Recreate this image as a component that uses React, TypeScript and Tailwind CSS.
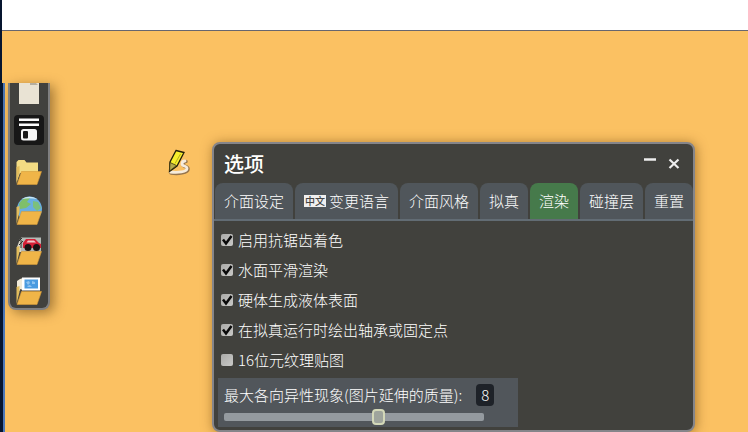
import { useState } from 'react';
import type { ButtonHTMLAttributes, ReactNode } from 'react';

const tabs = ['介面设定', '变更语言', '介面风格', '拟真', '渲染', '碰撞层', '重置'];

const renderOptions = [
  { label: '启用抗锯齿着色', on: true },
  { label: '水面平滑渲染', on: true },
  { label: '硬体生成液体表面', on: true },
  { label: '在拟真运行时绘出轴承或固定点', on: true },
  { label: '16位元纹理贴图', on: false },
];

function ToolButton({ className = '', ...props }: ButtonHTMLAttributes<HTMLButtonElement>) {
  return <button type="button" {...props} className={`flex justify-center ${className}`} />;
}

function Folder({ children }: { children?: ReactNode }) {
  return (
    <svg viewBox="0 0 26 30" className="h-[30px] w-[26px]">
      {children}
      <path d="M0.5 29V12l3-1v6z" fill="#e3bd5c" />
      <path d="M5.5 16.500H25.500L21 29.500H1z" fill="#f0b548" stroke="#d79c38" strokeWidth="0.6" />
    </svg>
  );
}

function Sidebar() {
  return (
    <nav className="flex flex-col gap-2.5 rounded-b-lg border-2 border-t-0 border-[#7f7f80] bg-[#41413e] px-1 pb-[3px] shadow-[4px_3px_12px_rgba(80,50,10,0.5)]">
      <ToolButton aria-label="新建">
        <svg viewBox="0 0 22 22" className="size-[22px]">
          <path d="M1 0h20v21H1z" fill="#e9e3d4" />
          <path d="M12 0v2h8l-2-2z" fill="#b5aea0" />
        </svg>
      </ToolButton>
      <ToolButton aria-label="保存">
        <svg viewBox="0 0 30 30" className="size-[30px]">
          <rect width="30" height="30" rx="4" fill="#171717" />
          <path d="M5 3.500h20v2.500H5zM5 8.500h20v2.500H5z" fill="#fff" />
          <rect x="7" y="14" width="16" height="11.500" rx="2.500" fill="#f5f5f5" />
          <rect x="9" y="16" width="5" height="7.500" rx="1" fill="#171717" />
        </svg>
      </ToolButton>
      <ToolButton aria-label="打开">
        <Folder>
          <path d="M0.500 27V7l2-2h6l2 2.500H22V18H4z" fill="#f3dc83" />
        </Folder>
      </ToolButton>
      <ToolButton aria-label="网络">
        <Folder>
          <circle cx="13.500" cy="14" r="12.500" fill="#6aaee0" />
          <path d="M3 9c3-5 8-8 11-6l-3 4 4 2-5 4-6 1z" fill="#7fbf6a" />
          <path d="M17 6l5 1 3 6-4 3-4-4z" fill="#7cc07c" />
          <path d="M6 4c5-3 10-3 15 0-5-1-10-1-15 0z" fill="#cfe8f6" />
        </Folder>
      </ToolButton>
      <ToolButton aria-label="场景">
        <Folder>
          <path d="M1 12l3-8 6-1v14H1z" fill="#d9d5c8" />
          <rect x="5" y="2.500" width="20" height="15" fill="#b4b9b5" />
          <path d="M3 6l3-3M3 10l4-4M5 13V5" stroke="#33332f" strokeWidth="1" />
          <path d="M7 13V8l3-4h9l4 4 2 1v4z" fill="#d51f35" />
          <path d="M10.500 7.500l1.500-2h6l2 2z" fill="#f3c6c8" />
          <circle cx="12" cy="12.500" r="3.500" fill="#191414" />
          <circle cx="20.500" cy="12.500" r="3.500" fill="#191414" />
        </Folder>
      </ToolButton>
      <ToolButton aria-label="图片">
        <Folder>
          <path d="M1 14V6l3-2v12zM4 14V4l3-1v12z" fill="#f0ead8" />
          <rect x="6" y="2.500" width="18" height="13" fill="#fff" />
          <rect x="8.500" y="4.500" width="13.500" height="9" fill="#4a9be0" />
          <path d="M10 7l3-1 1 2-2 2zM16 6l3 1v2h-3zM11 11l3-1 2 2h-4z" fill="#8fc4ef" />
        </Folder>
      </ToolButton>
    </nav>
  );
}

function PencilCursor() {
  return (
    <svg viewBox="0 0 24 28" className="h-7 w-6" aria-hidden="true">
      <path
        d="M4 25c7 1 17 0 17-4 0-3-5-2-5-4.500 0-2 1-3 3-3"
        fill="none"
        stroke="#96754c"
        strokeWidth="3.500"
        strokeLinecap="round"
      />
      <path
        d="M3.500 24c7 1 16.500 0 16.500-3.500 0-3-5-2-5-4.500 0-2 1-3 3-3"
        fill="none"
        stroke="#f6ecdc"
        strokeWidth="2.800"
        strokeLinecap="round"
      />
      <path d="M9 2.500l8 2-7 13.500-7.500 5.500.5-9.500z" fill="#f6ee2c" stroke="#211d08" strokeWidth="1.300" />
      <path d="M3 14.500l6.500 3-7 5.500z" fill="#b3a94e" stroke="#3a3410" strokeWidth="0.800" />
      <path d="M13.500 6L8 15.500" stroke="#b5ad1e" strokeWidth="1" />
    </svg>
  );
}

function CheckRow({ label, on }: { label: string; on: boolean }) {
  const [checked, setChecked] = useState(on);
  return (
    <label className="flex h-[30px] items-center gap-[5px]">
      <span className="grid">
        <input
          type="checkbox"
          checked={checked}
          onChange={(e) => setChecked(e.target.checked)}
          className="col-start-1 row-start-1 size-3 appearance-none rounded-xs bg-linear-to-br from-[#aaaaa8] to-[#c9c9c7]"
        />
        {checked && (
          <svg viewBox="0 0 12 12" className="pointer-events-none col-start-1 row-start-1 size-3">
            <path d="M2 5.500L5 9.500L10.500 2" fill="none" stroke="#0a0a0a" strokeWidth="2.500" />
          </svg>
        )}
      </span>
      {label}
    </label>
  );
}

function AnisotropySlider() {
  // each step doubles the sample count
  const [step, setStep] = useState(3);
  return (
    <div className="mt-[3px] mr-[175px] ml-1 bg-[#51565b] px-1.5 pt-1.5 pb-0.5">
      <div className="flex items-center gap-3.5 whitespace-nowrap">
        <label htmlFor="aniso">最大各向异性现象(图片延伸的质量):</label>
        <output
          htmlFor="aniso"
          className="flex h-[22px] w-[18px] items-center justify-center rounded-sm bg-[#1e2228]"
        >
          {2 ** step}
        </output>
      </div>
      <input
        id="aniso"
        type="range"
        min={0}
        max={5}
        value={step}
        onChange={(e) => setStep(Number(e.target.value))}
        className="mt-[3px] block h-4 w-[260px] appearance-none bg-transparent [&::-webkit-slider-runnable-track]:h-2 [&::-webkit-slider-runnable-track]:rounded-xs [&::-webkit-slider-runnable-track]:bg-[#949a9f] [&::-webkit-slider-thumb]:-mt-1 [&::-webkit-slider-thumb]:h-4 [&::-webkit-slider-thumb]:w-[13px] [&::-webkit-slider-thumb]:appearance-none [&::-webkit-slider-thumb]:rounded-sm [&::-webkit-slider-thumb]:border-2 [&::-webkit-slider-thumb]:border-[#d3d8b8] [&::-webkit-slider-thumb]:bg-[#9ea49c]"
      />
    </div>
  );
}

function OptionsWindow() {
  const [active, setActive] = useState('渲染');
  return (
    <section className="mt-[59px] mr-[54px] ml-[21px] min-w-0 flex-1 rounded-lg border-2 border-[#85858a] bg-[#41413d] pb-[3px] shadow-[1px_1px_12px_rgba(90,50,0,0.5)]">
      <header className="flex h-[39px] items-center pr-[13px] pl-2.5">
        <h1 className="flex-1 text-xl font-medium">选项</h1>
        <div className="flex gap-3">
          <button type="button" aria-label="最小化">
            <svg viewBox="0 0 12 12" className="size-3">
              <path d="M0 1.500h12" stroke="#eee" strokeWidth="2.500" />
            </svg>
          </button>
          <button type="button" aria-label="关闭">
            <svg viewBox="0 0 12 12" className="size-3">
              <path d="M1.500 1.500l9 8.500M10.500 1.500l-9 8.500" stroke="#eee" strokeWidth="2.200" />
            </svg>
          </button>
        </div>
      </header>
      <div role="tablist" className="flex gap-0.5 border-b-2 border-[#626c74] pl-px">
        {tabs.map((tab) => (
          <button
            key={tab}
            type="button"
            role="tab"
            aria-selected={tab === active}
            onClick={() => setActive(tab)}
            className={`flex h-9 items-center gap-[3px] rounded-t-lg px-[9px] whitespace-nowrap ${
              tab === active ? 'bg-[#467a4b]' : 'bg-[#50565b]'
            }`}
          >
            {tab === '变更语言' && (
              <span className="flex h-3 w-[22px] items-center justify-center bg-[#efefef] text-[10px] font-medium text-[#444]">
                中文
              </span>
            )}
            {tab}
          </button>
        ))}
      </div>
      <div className="pt-1">
        <div className="pl-[7px]">
          {renderOptions.map((option) => (
            <CheckRow key={option.label} {...option} />
          ))}
        </div>
        <AnisotropySlider />
      </div>
    </section>
  );
}

export default function App() {
  return (
    <div className="flex min-h-screen flex-col bg-[#fbc162] font-['Noto_Sans_CJK_SC',sans-serif] text-[15px] leading-[22px] font-light text-white">
      <div className="h-[83px] border-l-2 border-[#06152f]">
        <div className="h-[31px] border-b border-[#67666f] bg-white" />
      </div>
      <div className="flex flex-1 border-l-3 border-[#06152f]">
        <div className="flex flex-1 items-start border-l-2 border-[#4d78b8] pl-[3px]">
          <Sidebar />
          <div className="mt-[65px] ml-[117px]">
            <PencilCursor />
          </div>
          <OptionsWindow />
        </div>
      </div>
    </div>
  );
}
